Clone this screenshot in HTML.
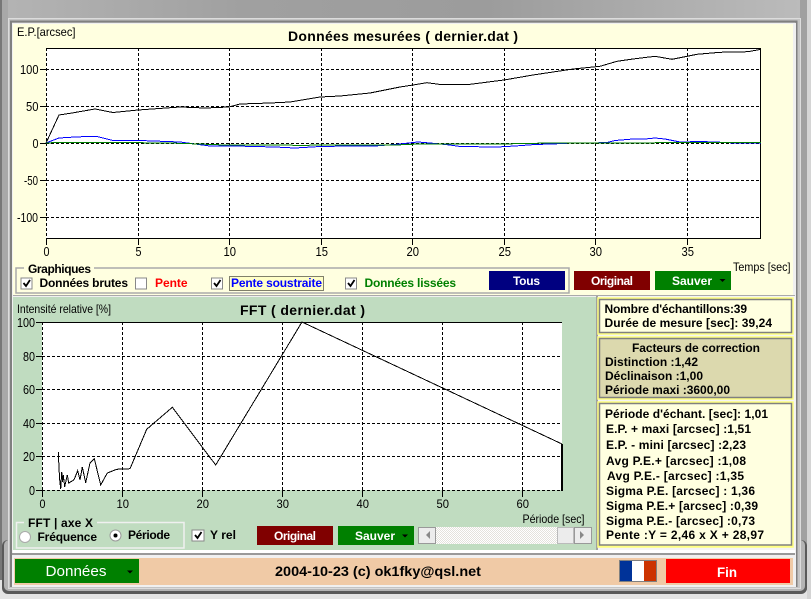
<!DOCTYPE html>
<html><head><meta charset="utf-8"><style>
html,body{margin:0;padding:0;background:#e4e4e4;width:811px;height:599px;overflow:hidden}
svg{display:block;position:absolute;left:0;top:0}
text{font-family:"Liberation Sans",sans-serif;font-size:12px;fill:#000;white-space:pre}
.b{font-weight:bold}
.t{font-weight:bold;font-size:14px}
.r{font-size:12px}
.a{font-size:13px}
.c{text-anchor:middle}
.g line,.g path,.j{shape-rendering:crispEdges}
</style></head><body>
<svg width="811" height="599" viewBox="0 0 811 599">
<defs>
<linearGradient id="top" x1="0" x2="1" y1="0" y2="0"><stop offset="0" stop-color="#b4b4b4"/><stop offset=".3" stop-color="#a0a0a0"/><stop offset=".6" stop-color="#9c9c9c"/><stop offset="1" stop-color="#bcbcbc"/></linearGradient>
<pattern id="dith" width="2" height="2" patternUnits="userSpaceOnUse"><rect width="2" height="2" fill="#fff"/><rect width="1" height="1" fill="#e4e2dc"/><rect x="1" y="1" width="1" height="1" fill="#e4e2dc"/></pattern>
</defs>
<!-- outer background -->
<rect width="811" height="599" fill="#e4e4e4"/>
<rect width="811" height="20" fill="url(#top)"/>
<rect x="0" y="0" width="2" height="580" fill="#777"/>
<rect x="2" y="0" width="6" height="580" fill="#a8a8a8"/>
<rect x="800" y="0" width="7" height="590" fill="#a0a0a0"/>
<rect x="807" y="0" width="4" height="599" fill="#d4d4d4"/>
<!-- window frame -->
<rect x="2" y="540" width="805" height="54" rx="6" fill="#5a5a5a"/>
<rect x="4" y="540" width="801" height="51" rx="5" fill="#b4b4b4"/>
<rect x="8" y="18" width="793" height="571" fill="#c4c4c4"/>
<rect x="8.5" y="18.500" width="792" height="570" fill="none" stroke="#dcdcdc"/>
<path d="M11 587V21.500H796.500V587" fill="none" stroke="#808080" stroke-width="2" class="j"/>
<rect x="12" y="23" width="784" height="564" fill="#f0f0f0"/>

<!-- top panel -->
<rect x="13" y="24" width="780" height="271" fill="#ffffe0"/>
<!-- bottom-left panel -->
<rect x="13" y="297" width="583" height="253" fill="#c0dcc0"/>
<rect x="596" y="296" width="2" height="254" fill="#a0a0a0"/>
<rect x="598" y="296" width="197" height="254" fill="#f4f4f4"/>
<line x1="13" x2="795" y1="295.500" y2="295.500" stroke="#aaa"/>
<line x1="13" x2="795" y1="551.500" y2="551.500" stroke="#ffffff" stroke-width="3"/>
<rect x="12" y="553" width="783" height="2" fill="#999"/>

<!-- TOP CHART -->
<rect x="46" y="48" width="715" height="190" fill="#fff"/>
<g class="g" stroke="#000" stroke-width="1" stroke-dasharray="3 2" fill="none">
<line x1="46" x2="761" y1="69.500" y2="69.500"/><line x1="46" x2="761" y1="106.500" y2="106.500"/><line x1="46" x2="761" y1="143.500" y2="143.500"/><line x1="46" x2="761" y1="180.500" y2="180.500"/><line x1="46" x2="761" y1="217.500" y2="217.500"/>
<line y1="48" y2="238" x1="46.500" x2="46.500"/><line y1="48" y2="238" x1="138.500" x2="138.500"/><line y1="48" y2="238" x1="229.500" x2="229.500"/><line y1="48" y2="238" x1="321.500" x2="321.500"/><line y1="48" y2="238" x1="412.500" x2="412.500"/><line y1="48" y2="238" x1="504.500" x2="504.500"/><line y1="48" y2="238" x1="595.500" x2="595.500"/><line y1="48" y2="238" x1="687.500" x2="687.500"/>
</g>
<g class="g" stroke="#000" fill="none">
<path d="M46 48.500H760.500V238.500H46"/>
<path d="M40 69.500H46M40 106.500H46M40 143.500H46M40 180.500H46M40 217.500H46"/>
<path d="M46.500 238V245M138.500 238V245M229.500 238V245M321.500 238V245M412.500 238V245M504.500 238V245M595.500 238V245M687.500 238V245"/>
</g>
<polyline class="j" fill="none" stroke="#000" stroke-width="1" points="46,143 59,115 72,113 95,109 113,112.500 138,110 180,107 205,108 229,107 240,104 270,103 290,102 320,97 340,96 370,93 400,87 413,85 427,82.700 442,84.700 467,84.700 504,80 533,75 573,69 600,66.300 617,61.300 633,59 655,56.300 672,59.300 697,54.300 720,52.300 748,51.700 761,49.300"/>
<polyline class="j" fill="none" stroke="#0000ff" stroke-width="1" points="46,143 59,138 75,137 87,136.500 97,136.500 113,140.500 140,140.500 180,142 195,144 210,146 235,146 275,147 295,148 320,146.500 350,146 375,146 400,144 418,142 430,143 450,145 460,146.500 497,147 515,146 535,144.500 552,144 572,143 590,143 607,142.500 615,140.500 633,139 645,139 655,138 665,139 680,142 700,141.500 715,142 735,143 761,143"/>
<polyline class="j" fill="none" stroke="#008000" stroke-width="1" points="46,143 60,142.300 140,142.700 180,143.300 220,144.800 300,145.300 400,144.800 420,144 500,144 550,143 761,142.500"/>

<text x="288" y="41" class="t" textLength="230" lengthAdjust="spacing">Données mesurées ( dernier.dat )</text>
<text x="17" y="36" class="r" textLength="58.500" lengthAdjust="spacingAndGlyphs">E.P.[arcsec]</text>
<text x="20" y="74" class="a" textLength="18.500" lengthAdjust="spacingAndGlyphs">100</text>
<text x="26" y="111" class="a" textLength="12.500" lengthAdjust="spacingAndGlyphs">50</text>
<text x="32.500" y="148" class="a" textLength="6" lengthAdjust="spacingAndGlyphs">0</text>
<text x="24" y="185" class="a" textLength="14" lengthAdjust="spacingAndGlyphs">-50</text>
<text x="17" y="222" class="a" textLength="21" lengthAdjust="spacingAndGlyphs">-100</text>
<g class="a" lengthAdjust="spacingAndGlyphs"><text x="43.500" y="256" class="a" textLength="6" lengthAdjust="spacingAndGlyphs">0</text><text x="135.500" y="256" class="a" textLength="6" lengthAdjust="spacingAndGlyphs">5</text><text x="223.500" y="256" class="a" textLength="12.500" lengthAdjust="spacingAndGlyphs">10</text><text x="315.500" y="256" class="a" textLength="12.500" lengthAdjust="spacingAndGlyphs">15</text><text x="406.500" y="256" class="a" textLength="12.500" lengthAdjust="spacingAndGlyphs">20</text><text x="498.500" y="256" class="a" textLength="12.500" lengthAdjust="spacingAndGlyphs">25</text><text x="589.500" y="256" class="a" textLength="12.500" lengthAdjust="spacingAndGlyphs">30</text><text x="681.500" y="256" class="a" textLength="12.500" lengthAdjust="spacingAndGlyphs">35</text></g>
<text x="733" y="271" class="r" textLength="57.500" lengthAdjust="spacingAndGlyphs">Temps [sec]</text>

<!-- Graphiques group -->
<rect x="16" y="268" width="553" height="25" fill="none" stroke="#aaa" stroke-width="1.500"/>
<rect x="24" y="264" width="70" height="9" fill="#ffffe0"/>
<text x="28" y="273" class="b" textLength="63">Graphiques</text>
<rect x="21" y="278" width="11" height="11" fill="#fff" stroke="#888"/><path d="M23.500 283l2.500 3 4-6" fill="none" stroke="#000" stroke-width="1.800"/>
<rect x="135.500" y="278" width="11" height="11" fill="#fff" stroke="#888"/>
<rect x="211.500" y="278" width="11" height="11" fill="#fff" stroke="#888"/><path d="M214 283l2.500 3 4-6" fill="none" stroke="#000" stroke-width="1.800"/>
<rect x="345.500" y="278" width="11" height="11" fill="#fff" stroke="#888"/><path d="M348 283l2.500 3 4-6" fill="none" stroke="#000" stroke-width="1.800"/>
<text x="39.500" y="287" class="b" textLength="88.500">Données brutes</text>
<text x="155" y="287" class="b" style="fill:#f00" textLength="32.500">Pente</text>
<rect class="j" x="229.500" y="276.500" width="94" height="14" fill="#ffff99" fill-opacity=".35" stroke="#000" stroke-dasharray="1 1"/>
<text x="231" y="287" class="b" style="fill:#00f" textLength="91">Pente soustraite</text>
<text x="364.500" y="287" class="b" style="fill:#008000" textLength="91.500">Données lissées</text>

<rect x="489" y="271" width="76" height="19" fill="#000080"/>
<text x="513" y="285" class="b" style="fill:#fff" textLength="27">Tous</text>
<rect x="574" y="271" width="76" height="19" fill="#800000"/>
<text x="591" y="285" class="b" style="fill:#fff" textLength="42">Original</text>
<rect x="655" y="271" width="76" height="19" fill="#008000"/>
<text x="672" y="285" class="b" style="fill:#fff" textLength="40">Sauver</text>
<path d="M719.500 279h6l-3 3z" fill="#000"/>

<!-- FFT CHART -->
<rect x="42" y="322" width="520" height="168" fill="#fff"/>
<g class="g" stroke="#000" stroke-width="1" stroke-dasharray="3 2" fill="none">
<line x1="42" x2="562" y1="356.500" y2="356.500"/><line x1="42" x2="562" y1="389.500" y2="389.500"/><line x1="42" x2="562" y1="423.500" y2="423.500"/><line x1="42" x2="562" y1="456.500" y2="456.500"/><line x1="42" x2="562" y1="490.500" y2="490.500"/>
<line y1="322" y2="490" x1="42.500" x2="42.500"/><line y1="322" y2="490" x1="122.500" x2="122.500"/><line y1="322" y2="490" x1="202.500" x2="202.500"/><line y1="322" y2="490" x1="282.500" x2="282.500"/><line y1="322" y2="490" x1="362.500" x2="362.500"/><line y1="322" y2="490" x1="442.500" x2="442.500"/><line y1="322" y2="490" x1="522.500" x2="522.500"/>
</g>
<g class="g" stroke="#000" fill="none">
<path d="M36 322.500H562"/>
<path d="M36 356.500H42M36 389.500H42M36 423.500H42M36 456.500H42M36 490.500H42"/>
<path d="M42.500 490V497M122.500 490V497M202.500 490V497M282.500 490V497M362.500 490V497M442.500 490V497M522.500 490V497"/>
<path d="M562 444V491" stroke-width="2"/>
</g>
<polyline class="j" fill="none" stroke="#000" stroke-width="1" points="58.300,452 59,468 59.700,480 60.700,489 61.700,472 62.500,482 63.300,475 64.700,486.700 67.300,475 68.700,483 72.700,480.700 74.300,479 77.700,470.700 80,480 82.300,467 85.700,482.700 90,463 94.300,458.700 100.700,485 107.300,473 116.700,469.300 130,468.700 146.700,429.300 172.300,407.300 215.700,465 302,322 562,444"/>

<text x="17" y="313" class="r" textLength="94" lengthAdjust="spacingAndGlyphs">Intensité relative [%]</text>
<text x="240" y="315" class="t" textLength="125">FFT ( dernier.dat )</text>
<text x="17" y="327" class="a" textLength="18" lengthAdjust="spacingAndGlyphs">100</text>
<text x="23" y="361" class="a" textLength="12" lengthAdjust="spacingAndGlyphs">80</text>
<text x="23" y="394" class="a" textLength="12" lengthAdjust="spacingAndGlyphs">60</text>
<text x="23" y="428" class="a" textLength="12" lengthAdjust="spacingAndGlyphs">40</text>
<text x="23" y="461" class="a" textLength="12" lengthAdjust="spacingAndGlyphs">20</text>
<text x="29" y="495" class="a" textLength="6" lengthAdjust="spacingAndGlyphs">0</text>
<text x="39.500" y="508" class="r" textLength="6" lengthAdjust="spacingAndGlyphs">0</text><text x="116.500" y="508" class="r" textLength="12.500" lengthAdjust="spacingAndGlyphs">10</text><text x="196.500" y="508" class="r" textLength="12.500" lengthAdjust="spacingAndGlyphs">20</text><text x="276.500" y="508" class="r" textLength="12.500" lengthAdjust="spacingAndGlyphs">30</text><text x="356.500" y="508" class="r" textLength="12.500" lengthAdjust="spacingAndGlyphs">40</text><text x="436.500" y="508" class="r" textLength="12.500" lengthAdjust="spacingAndGlyphs">50</text><text x="516.500" y="508" class="r" textLength="12.500" lengthAdjust="spacingAndGlyphs">60</text>
<text x="522.500" y="523" class="r" textLength="62" lengthAdjust="spacingAndGlyphs">Période [sec]</text>

<!-- FFT axe group -->
<rect x="16.500" y="522.500" width="167.500" height="25.500" fill="none" stroke="#f0f0f0" stroke-width="1.500"/>
<rect x="24" y="518" width="73" height="9" fill="#c0dcc0"/>
<text x="28" y="527" class="b" textLength="65">FFT | axe X</text>
<circle cx="25" cy="537" r="5.500" fill="#fff" stroke="#aaa"/>
<text x="37.500" y="541" class="b" textLength="59.500">Fréquence</text>
<circle cx="115.500" cy="535.500" r="5.500" fill="#fff" stroke="#999"/><circle cx="115.500" cy="535.500" r="2" fill="#000"/>
<text x="128" y="539" class="b" textLength="42">Période</text>
<rect x="192" y="530" width="12" height="11" fill="#fff" stroke="#888"/><path d="M195 535l2.500 3 4-6" fill="none" stroke="#000" stroke-width="1.800"/>
<text x="210" y="539" class="b" textLength="26">Y rel</text>
<rect x="257" y="526" width="76" height="19" fill="#800000"/>
<text x="274" y="540" class="b" style="fill:#fff" textLength="42">Original</text>
<rect x="338" y="526" width="76" height="19" fill="#008000"/>
<text x="355" y="540" class="b" style="fill:#fff" textLength="40">Sauver</text>
<path d="M402 534.500h6l-3 3z" fill="#000"/>
<!-- scrollbar -->
<rect x="418" y="527" width="174" height="17" fill="url(#dith)"/>
<rect x="418.500" y="527.500" width="17" height="16" fill="#ececec" stroke="#999"/>
<path d="M430 531v8l-4-4z" fill="#888"/>
<rect x="557.500" y="527.500" width="16" height="16" fill="#ececec" stroke="#bbb"/>
<rect x="574.500" y="527.500" width="17" height="16" fill="#ececec" stroke="#999"/>
<path d="M580 531v8l4-4z" fill="#888"/>

<!-- right column boxes -->
<g stroke="#ffff80" stroke-width="1.500"><rect x="598" y="298" width="195" height="36" fill="#ffff80"/><rect x="598" y="337" width="195" height="62" fill="#ffff80"/><rect x="598" y="402" width="195" height="145" fill="#ffff80"/></g>
<rect x="599.500" y="299.500" width="192" height="33" fill="#ffffe0" stroke="#808080" stroke-width="1.500"/>
<rect x="599.500" y="338.500" width="192" height="59" fill="#dcd9ae" stroke="#808080" stroke-width="1.500"/>
<rect x="599.500" y="403.500" width="192" height="141.500" fill="#ffffe0" stroke="#808080" stroke-width="1.500"/>
<text class="b" x="604.500" y="313" textLength="142.500">Nombre d'échantillons:39</text>
<text class="b" x="604.500" y="327" textLength="167.500">Durée de mesure [sec]: 39,24</text>
<text class="b" x="632" y="352" textLength="128">Facteurs de correction</text>
<text class="b" x="605" y="366" textLength="93">Distinction :1,42</text>
<text class="b" x="605" y="380" textLength="98">Déclinaison :1,00</text>
<text class="b" x="605" y="394" textLength="125">Période maxi :3600,00</text>
<text class="b" x="605" y="418" textLength="163">Période d'échant. [sec]: 1,01</text>
<text class="b" x="606" y="433" textLength="145">E.P. + maxi [arcsec] :1,51</text>
<text class="b" x="606" y="449" textLength="140">E.P. - mini [arcsec] :2,23</text>
<text class="b" x="606" y="465" textLength="140">Avg P.E.+ [arcsec] :1,08</text>
<text class="b" x="607" y="480" textLength="137">Avg P.E.- [arcsec] :1,35</text>
<text class="b" x="606" y="495" textLength="149">Sigma P.E. [arcsec] : 1,36</text>
<text class="b" x="606" y="510" textLength="152">Sigma P.E.+ [arcsec] :0,39</text>
<text class="b" x="606" y="525" textLength="149">Sigma P.E.- [arcsec] :0,73</text>
<text class="b" x="606" y="539" textLength="158">Pente :Y = 2,46 x X + 28,97</text>

<!-- bottom bar -->
<rect x="14" y="558" width="779" height="27" fill="#f0caa6"/>
<rect x="15" y="559" width="124" height="24" fill="#008000"/>
<text x="45.500" y="576" style="fill:#fff;font-size:15px" textLength="61" lengthAdjust="spacingAndGlyphs">Données</text>
<path d="M127 570.500h6l-3 3z" fill="#000"/>
<text x="275" y="576" class="t" textLength="206" lengthAdjust="spacingAndGlyphs">2004-10-23 (c) ok1fky@qsl.net</text>
<rect x="619" y="560" width="38" height="22" fill="#808080"/>
<rect x="620" y="561" width="12" height="20" fill="#003399"/>
<rect x="632" y="561" width="12" height="20" fill="#ffffff"/>
<rect x="644" y="561" width="12" height="20" fill="#cc3300"/>
<rect x="666" y="559" width="124" height="24" fill="#ff0000"/>
<text x="717" y="577" class="t" style="fill:#fff" textLength="20" lengthAdjust="spacingAndGlyphs">Fin</text>
</svg>
</body></html>
